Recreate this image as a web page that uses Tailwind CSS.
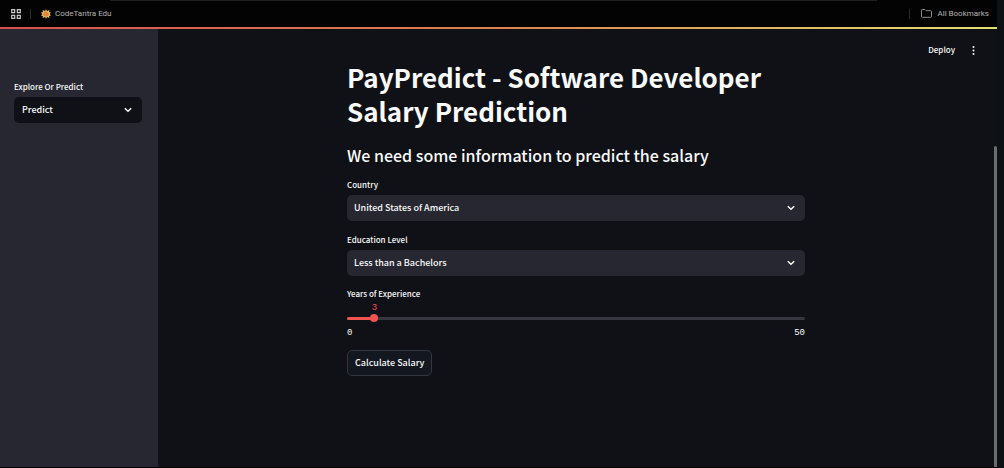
<!DOCTYPE html>
<html lang="en">
<head>
<meta charset="utf-8">
<meta name="viewport" content="width=device-width, initial-scale=1">
<title>PayPredict</title>
<script src="https://cdn.jsdelivr.net/npm/@tailwindcss/browser@4"></script>
</head>
<body class="flex min-h-screen bg-[#0d1114] font-['Noto_Sans_CJK_JP','Open_Sans',sans-serif] text-[#fafafa]">
<div class="mr-[7px] flex min-w-0 flex-1 flex-col border-b border-black bg-[#0f1116]">

  <!-- Bookmarks bar -->
  <nav class="relative flex h-[27px] items-center bg-[#030303] pr-2 pl-[11px] font-['Roboto',sans-serif] text-[8px] text-[#b4b4b4]" aria-label="Bookmarks">
    <span class="absolute top-0 right-[12%] left-[11%] h-px bg-[#1f1f1f]"></span>
    <button class="flex" aria-label="Apps">
      <svg class="size-[10px]" viewBox="0 0 10 10" fill="none" stroke="#c8c8c8" stroke-width="1.2"><path d="M.7.7h3v3h-3zM6.3.7h3v3h-3zM.7 6.3h3v3h-3zM6.3 6.3h3v3h-3z"/></svg>
    </button>
    <span class="ml-[9px] h-[10px] w-px bg-[#2a2a2a]"></span>
    <a href="#" class="ml-[10px] flex items-center gap-1">
      <svg class="size-[10px]" viewBox="0 0 10 10"><path fill="#e5c05e" d="M5 0l.9 2L8.500.9 8 3l2 .5L8.700 5 10 6.500 8 7l.5 2.100L5.900 8 5 10l-.9-2-2.600 1.100L2 7 0 6.500 1.300 5 0 3.500 2 3 1.500.9 4.100 2z"/><circle cx="5" cy="5" r="2.700" fill="#e5853f"/></svg>
      <span>CodeTantra Edu</span>
    </a>
    <span class="ml-auto h-[10px] w-px bg-[#2a2a2a]"></span>
    <a href="#" class="ml-[11px] flex items-center gap-[5px]">
      <svg class="h-[9px] w-[11px]" viewBox="0 0 11 9" fill="none" stroke="#8c8c8c"><path d="M.5 1.300q0-.8.800-.8h2.700l1.200 1.200h4.500q.8 0 .8.800v5q0 .8-.8.800H1.300q-.8 0-.8-.8z"/></svg>
      <span>All Bookmarks</span>
    </a>
  </nav>
  <div class="h-[2px] bg-linear-to-r from-[#d6504b] via-[#dc8250] to-[#e0e070]"></div>

  <div class="flex flex-1">
    <!-- Sidebar -->
    <aside class="w-[158px] shrink-0 bg-[#262730] pt-[52px] pr-4 pl-[14px]">
      <label for="page" class="block text-[8px] leading-3 font-medium">Explore Or Predict</label>
      <div class="mt-1 grid items-center">
        <select id="page" class="col-start-1 row-start-1 h-[26px] w-full appearance-none rounded-[5px] bg-[#0f1116] px-2 text-[9px] font-medium"><option>Predict</option><option>Explore</option></select>
        <svg class="pointer-events-none col-start-1 row-start-1 mr-[10px] h-[6px] w-2 justify-self-end" viewBox="0 0 8 6" fill="none" stroke="#fafafa" stroke-width="1.500"><path d="M.8 1.200 4 4.200l3.200-3"/></svg>
      </div>
    </aside>

    <!-- Page -->
    <main class="flex min-w-0 flex-1 flex-col">
      <header class="flex h-[31px] items-center justify-end gap-4 pt-[11px] pr-[18px] text-[8px]">
        <button class="font-medium">Deploy</button>
        <button class="flex" aria-label="Menu"><svg class="h-[9px] w-[5px]" viewBox="0 0 5 9" fill="#fafafa"><circle cx="2.500" cy="1" r="1"/><circle cx="2.500" cy="4.500" r="1"/><circle cx="2.500" cy="8" r="1"/></svg></button>
      </header>
      <div class="mx-auto w-full max-w-[458px]">
        <h1 class="text-[26px] leading-[34px] font-bold">PayPredict - Software Developer Salary Prediction</h1>
        <h2 class="mt-4 text-[16px] leading-[22px] font-medium">We need some information to predict the salary</h2>

        <label for="country" class="mt-[13px] block text-[8px] leading-3 font-medium">Country</label>
        <div class="mt-1 grid items-center">
          <select id="country" class="col-start-1 row-start-1 h-[26px] w-full appearance-none rounded-[5px] bg-[#262730] px-[7px] text-[9px] font-medium"><option>United States of America</option></select>
          <svg class="pointer-events-none col-start-1 row-start-1 mr-[10px] h-[6px] w-2 justify-self-end" viewBox="0 0 8 6" fill="none" stroke="#fafafa" stroke-width="1.500"><path d="M.8 1.200 4 4.200l3.200-3"/></svg>
        </div>

        <label for="education" class="mt-[13px] block text-[8px] leading-3 font-medium">Education Level</label>
        <div class="mt-1 grid items-center">
          <select id="education" class="col-start-1 row-start-1 h-[26px] w-full appearance-none rounded-[5px] bg-[#262730] px-[7px] text-[9px] font-medium"><option>Less than a Bachelors</option></select>
          <svg class="pointer-events-none col-start-1 row-start-1 mr-[10px] h-[6px] w-2 justify-self-end" viewBox="0 0 8 6" fill="none" stroke="#fafafa" stroke-width="1.500"><path d="M.8 1.200 4 4.200l3.200-3"/></svg>
        </div>

        <label for="years" class="mt-3 block text-[8px] leading-3 font-medium">Years of Experience</label>
        <div class="relative mt-[14px] h-2">
          <output for="years" class="absolute bottom-full -translate-x-1/2 font-['Liberation_Mono',monospace] text-[9px] leading-3 text-[#ff4b4b]" style="left:6%">3</output>
          <div class="absolute inset-x-0 top-[3px] h-[3px] rounded-full bg-[#36373e]"><div class="h-full rounded-full bg-[#f0544f]" style="width:6%"></div></div>
          <input id="years" type="range" min="0" max="50" value="3" class="absolute -inset-x-1 top-0 h-2 appearance-none bg-transparent [&::-webkit-slider-thumb]:size-2 [&::-webkit-slider-thumb]:appearance-none [&::-webkit-slider-thumb]:rounded-full [&::-webkit-slider-thumb]:bg-[#f0544f]">
        </div>
        <div class="mt-[5px] flex justify-between font-['Liberation_Mono',monospace] text-[9px] leading-3"><span>0</span><span>50</span></div>

        <button class="mt-[11px] h-[26px] rounded-[5px] border border-[#34363d] bg-[#131720] px-[7px] text-[9px] font-medium">Calculate Salary</button>
      </div>
    </main>
    <div class="mt-[117px] w-[3px] rounded-t-full bg-[#6b6c70]"></div>
  </div>
</div>
</body>
</html>
